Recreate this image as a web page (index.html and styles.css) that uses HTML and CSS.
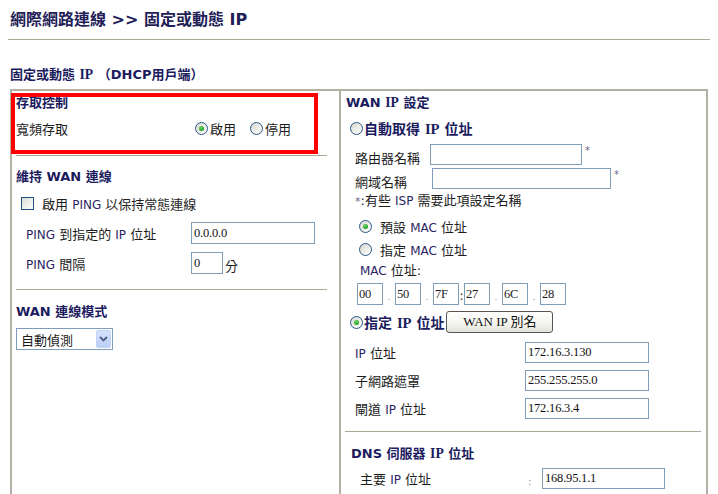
FILE: index.html
```html
<!DOCTYPE html>
<html lang="zh-Hant">
<head>
<meta charset="utf-8">
<title>固定或動態 IP</title>
<link rel="stylesheet" href="styles.css">
</head>
<body>
<div class="page">
  <h1 class="title">網際網路連線 &gt;&gt; 固定或動態 IP</h1>
  <div class="rule"></div>
  <h2 class="subtitle">固定或動態 <span class="sf">IP</span> （DHCP用戶端）</h2>

  <div class="panel">
    <div class="col left">
      <section class="sec sec-access">
        <div class="head">存取控制</div>
        <div class="access-row">
          <span class="access-lbl">寬頻存取</span>
          <span class="opt"><span class="radio on"></span><span>啟用</span></span>
          <span class="opt"><span class="radio"></span><span>停用</span></span>
        </div>
      </section>
      <div class="sep lsep"></div>

      <section class="sec sec-keep">
        <div class="head head-keep">維持 WAN 連線</div>
        <div class="check-row">
          <span class="checkbox"></span>
          <span>啟用 <span class="en">PING</span> 以保持常態連線</span>
        </div>
        <div class="ping-row">
          <span class="ping-lbl"><span class="en">PING</span> 到指定的 <span class="en">IP</span> 位址</span>
          <span class="field w124">0.0.0.0</span>
        </div>
        <div class="ping-row ping-row2">
          <span class="ping-lbl"><span class="en">PING</span> 間隔</span>
          <span class="field w32">0</span>
          <span class="unit">分</span>
        </div>
      </section>
      <div class="sep lsep lsep2"></div>

      <section class="sec sec-mode">
        <div class="head head-mode">WAN 連線模式</div>
        <div class="select">
          <span class="select-text">自動偵測</span>
          <span class="select-btn">
            <svg width="9" height="6" viewBox="0 0 9 6"><path d="M1 1 L4.5 4.5 L8 1" fill="none" stroke="#4d6185" stroke-width="1.8"/></svg>
          </span>
        </div>
      </section>
    </div>

    <div class="col right">
      <div class="head rhead">WAN <span class="sf">IP</span> 設定</div>
      <div class="big-radio auto-row"><span class="radio"></span><span class="big">自動取得 <span class="sf">IP</span> 位址</span></div>

      <div class="r-row router-row">
        <span class="r-lbl w75">路由器名稱</span>
        <span class="field w152 h21"></span>
        <span class="star">*</span>
      </div>
      <div class="r-row domain-row">
        <span class="r-lbl w77">網域名稱</span>
        <span class="field w179 h21"></span>
        <span class="star">*</span>
      </div>
      <div class="note"><span class="star-inline">*</span>:有些 <span class="en">ISP</span> 需要此項設定名稱</div>

      <div class="mac-radio mac-radio1"><span class="radio on"></span><span>預設 <span class="en">MAC</span> 位址</span></div>
      <div class="mac-radio mac-radio2"><span class="radio"></span><span>指定 <span class="en">MAC</span> 位址</span></div>
      <div class="mac-lbl"><span class="en">MAC</span> 位址:</div>
      <div class="mac-row">
        <span class="mac">00</span><span class="dot">.</span>
        <span class="mac">50</span><span class="dot">.</span>
        <span class="mac">7F</span><span class="colon">:</span>
        <span class="mac">27</span><span class="dot">.</span>
        <span class="mac">6C</span><span class="dot">.</span>
        <span class="mac">28</span>
      </div>

      <div class="big-radio ip-radio-row">
        <span class="radio on"></span><span class="big">指定 <span class="sf">IP</span> 位址</span>
        <span class="btn">WAN IP 別名</span>
      </div>

      <div class="ip-row ip-row1">
        <span class="ip-lbl"><span class="en">IP</span> 位址</span>
        <span class="field w124 h21">172.16.3.130</span>
      </div>
      <div class="ip-row">
        <span class="ip-lbl">子網路遮罩</span>
        <span class="field w124 h21">255.255.255.0</span>
      </div>
      <div class="ip-row">
        <span class="ip-lbl">閘道 <span class="en">IP</span> 位址</span>
        <span class="field w124 h21">172.16.3.4</span>
      </div>

      <div class="sep rsep"></div>
      <div class="head dns-head">DNS 伺服器 <span class="sf">IP</span> 位址</div>
      <div class="dns-row">
        <span class="dns-lbl">主要 <span class="en">IP</span> 位址</span>
        <span class="dns-colon">:</span>
        <span class="field w123 h21">168.95.1.1</span>
      </div>
    </div>
  </div>

  <div class="redbox"></div>
</div>
</body>
</html>
```

FILE: styles.css
```css
* { box-sizing: border-box; }

html, body {
  margin: 0;
  padding: 0;
  background: #ffffff;
  height: 494px;
  overflow: hidden;
}

body {
  font-family: "DejaVu Sans", "Noto Sans CJK TC", sans-serif;
  font-size: 13px;
  color: #1c1c1c;
}

.page {
  position: relative;
  padding: 10px 8px 0 8px;
}

.title {
  margin: 0 0 0 2px;
  font-size: 16px;
  line-height: 20px;
  font-weight: bold;
  color: #1f2157;
}

.rule {
  width: 702px;
  height: 1px;
  margin-top: 9px;
  background: #aca899;
}

.subtitle {
  margin: 27px 0 0 2px;
  font-size: 13px;
  line-height: 16px;
  font-weight: bold;
  color: #1b1b5e;
}

.sf { font-family: "Liberation Serif", "Noto Sans CJK TC", serif; font-size: 1.05em; }

.en { font-size: 12px; color: #2b1f63; }

.panel {
  margin: 6px 0 0 2px;
  width: 698px;
  height: 405px;
  border: 2px solid #b2b1a3;
  border-bottom: none;
  display: grid;
  grid-template-columns: 327px 1fr;
}

.col.right {
  border-left: 2px solid #b2b1a3;
}

.head {
  font-weight: bold;
  line-height: 20px;
  color: #1b1b5e;
}

.sep {
  height: 1px;
  background: #a9a899;
}

/* ---------- left column ---------- */
.sec { padding-left: 4px; }

.sec-access { height: 62px; }
.sec-access .head { margin-top: 2px; }

.access-row {
  display: flex;
  align-items: center;
  margin-top: 5px;
  height: 20px;
}
.access-lbl { width: 179px; }

.opt {
  display: flex;
  align-items: center;
  margin-right: 14px;
}
.opt .radio { margin-right: 2px; }

.lsep { margin-left: 4px; width: 311px; }
.lsep2 { margin-top: 15px; }

.head-keep { margin-top: 11px; }

.check-row {
  display: flex;
  align-items: center;
  height: 20px;
  margin-top: 6px;
  padding-left: 5px;
}
.checkbox {
  width: 13px;
  height: 13px;
  margin-right: 8px;
  border: 1px solid #1c5180;
  background: linear-gradient(135deg, #dcdcd7 0%, #f4f4f0 70%, #ffffff 100%);
}

.ping-row {
  display: flex;
  align-items: center;
  height: 22px;
  margin-top: 8px;
}
.sec-keep .ping-row:nth-of-type(3) { margin-top: 9px; }
.ping-lbl { width: 175px; padding-left: 10px; }
.unit { align-self: flex-end; margin-left: 2px; line-height: 16px; margin-bottom: -1px; }

.field {
  display: flex;
  align-items: center;
  height: 22px;
  padding-left: 2px;
  border: 1px solid #7f9db9;
  background: #fff;
  font-family: "Liberation Serif", serif;
  font-size: 12.5px;
  color: #111;
  letter-spacing: -0.2px;
}
.h21 { height: 21px; }
.w32 { width: 32px; }
.w123 { width: 123px; }
.w124 { width: 124px; }
.w152 { width: 152px; }
.w179 { width: 179px; }

.head-mode { margin-top: 12px; }

.select {
  display: flex;
  align-items: center;
  justify-content: space-between;
  width: 97px;
  height: 22px;
  margin-top: 6px;
  border: 1px solid #7f9db9;
  background: #fff;
  padding: 1px;
}
.select-text { padding-left: 3px; }
.select-btn {
  display: flex;
  align-items: center;
  justify-content: center;
  width: 15px;
  height: 18px;
  border-radius: 2px;
  background: linear-gradient(180deg, #d6e2fc 0%, #bccff8 100%);
  border: 1px solid #c2d3f6;
}

/* ---------- radios ---------- */
.radio {
  position: relative;
  display: inline-block;
  flex: none;
  width: 13px;
  height: 13px;
  border-radius: 50%;
  border: 1px solid #2a5585;
  background: linear-gradient(135deg, #d6d6cf 0%, #efefea 55%, #ffffff 100%);
}
.radio.on::after {
  content: "";
  position: absolute;
  left: 3px;
  top: 3px;
  width: 5px;
  height: 5px;
  border-radius: 50%;
  background: radial-gradient(circle at 40% 35%, #6fd46f 0%, #21a121 70%);
}

/* ---------- right column ---------- */
.rhead { margin-top: 2px; padding-left: 5px; }

.big-radio {
  display: flex;
  align-items: center;
  height: 20px;
  padding-left: 9px;
}
.big-radio .radio { margin-right: 1px; }
.big {
  font-size: 14px;
  font-weight: bold;
  color: #1b1b5e;
}
.auto-row { margin-top: 5px; }

.r-row {
  display: flex;
  align-items: flex-start;
  height: 21px;
  padding-left: 14px;
}
.router-row { margin-top: 6px; }
.domain-row { margin-top: 3px; }
.r-lbl { padding-top: 7px; line-height: 16px; }
.w75 { width: 75px; }
.w77 { width: 77px; }
.star {
  margin-left: 3px;
  font-size: 10px;
  line-height: 14px;
  color: #6a6a8a;
}

.note {
  margin-top: 4px;
  padding-left: 14px;
  line-height: 16px;
}
.star-inline { color: #6a6a8a; font-size: 11px; }

.mac-radio {
  display: flex;
  align-items: center;
  height: 20px;
  padding-left: 18px;
}
.mac-radio .radio { margin-right: 8px; }
.mac-radio1 { margin-top: 6px; }
.mac-radio2 { margin-top: 3px; }

.mac-lbl {
  margin-top: 4px;
  padding-left: 19px;
  line-height: 16px;
}

.mac-row {
  display: flex;
  align-items: center;
  margin-top: 4px;
  padding-left: 16px;
  height: 22px;
}
.mac {
  display: flex;
  align-items: center;
  width: 26px;
  height: 22px;
  padding-left: 1px;
  border: 1px solid #7f9db9;
  font-family: "Liberation Serif", serif;
  font-size: 12.5px;
  letter-spacing: -0.3px;
}
.dot {
  width: 12px;
  text-align: center;
  color: #8a8aa0;
  font-size: 9px;
  padding-top: 6px;
}
.colon {
  width: 5px;
  text-align: center;
  font-size: 12px;
  padding-top: 3px;
}

.ip-radio-row { margin-top: 6px; height: 22px; }
.btn {
  display: flex;
  align-items: center;
  justify-content: center;
  margin-left: 2px;
  width: 107px;
  height: 22px;
  padding-bottom: 4px;
  border: 1px solid #555555;
  border-radius: 3px;
  background: linear-gradient(180deg, #ffffff 0%, #f4f4ef 60%, #e2e2da 100%);
  font-family: "Liberation Serif", "Noto Sans CJK TC", serif;
  font-size: 13px;
  color: #111;
}

.ip-row {
  display: flex;
  align-items: center;
  height: 21px;
  margin-top: 7px;
  padding-left: 14px;
}
.ip-row1 { margin-top: 9px; }
.ip-lbl { width: 170px; }

.rsep { margin-top: 12px; margin-left: 4px; width: 356px; }

.dns-head { margin-top: 12px; padding-left: 10px; }

.dns-row {
  display: flex;
  align-items: center;
  height: 21px;
  margin-top: 4px;
  padding-left: 19px;
}
.dns-lbl { width: 168px; }
.dns-colon {
  width: 14px;
  color: #9090a0;
  font-size: 10px;
  padding-top: 6px;
}

/* annotation overlay */
.redbox {
  position: absolute;
  left: 11px;
  top: 93px;
  width: 307px;
  height: 61px;
  border: 4px solid #ff0000;
  pointer-events: none;
}
```
